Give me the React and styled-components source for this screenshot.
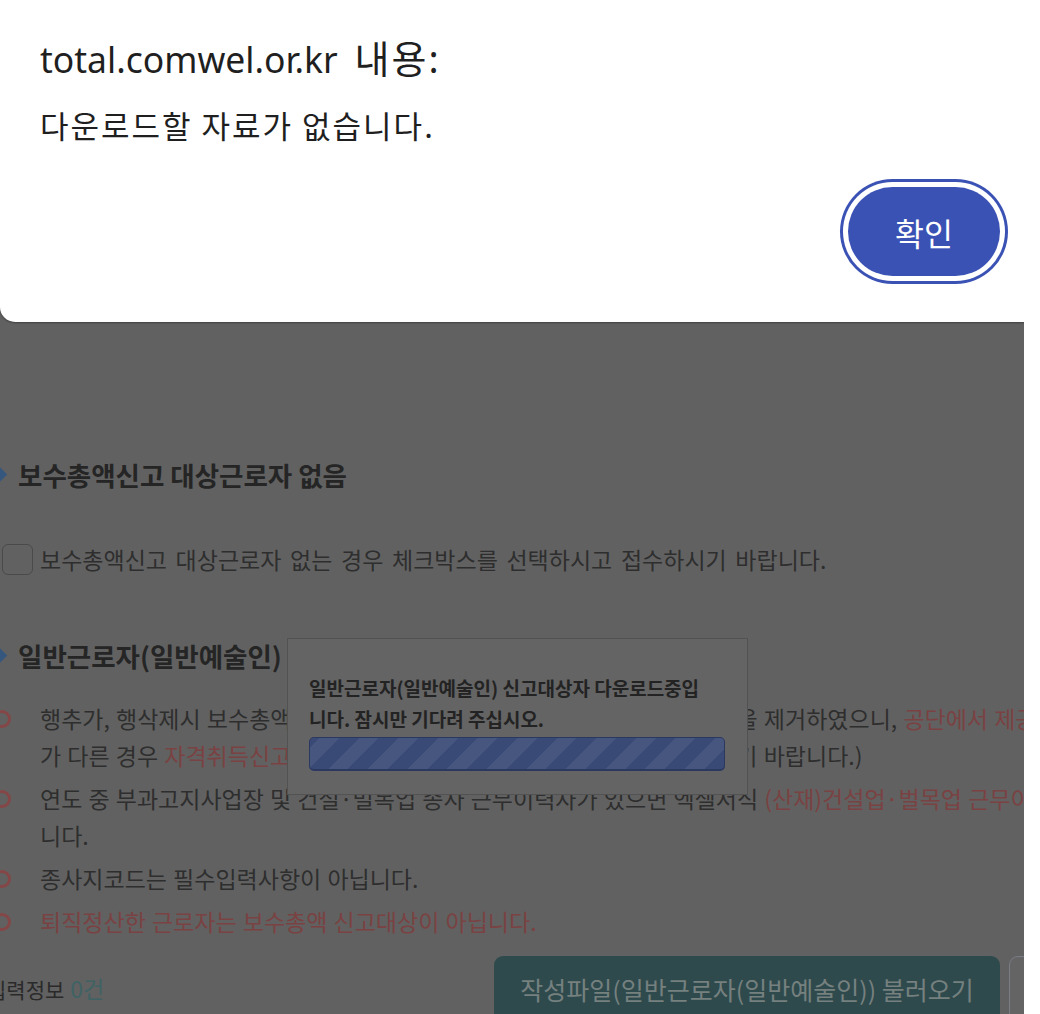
import React from 'react';
import styled, { createGlobalStyle } from 'styled-components';

const GlobalStyle = createGlobalStyle`
    html, body {
        margin: 0;
        padding: 0;
        background: #ffffff;
    }
`;

const Screen = styled.div`
    display: flex;
    width: 1040px;
    height: 1014px;
    overflow: hidden;
`;

const Viewport = styled.div`
    position: relative;
    flex: none;
    width: 1024px;
    height: 1014px;
    overflow: hidden;
    background: #616161;
    font-family: "Noto Sans CJK KR", "Noto Sans", sans-serif;
    color: #2e2e2e;
`;

const Gutter = styled.div`
    flex: none;
    width: 16px;
    background: #ffffff;
`;

const Page = styled.div`
    display: flex;
    flex-direction: column;
    padding-top: 457px;
`;

const SectionTitle = styled.h3`
    display: flex;
    align-items: center;
    margin: 0;
    height: 34px;
    font-size: 26.5px;
    font-weight: 700;
    color: #252525;
    white-space: nowrap;
`;

const Diamond = styled.span`
    flex: none;
    width: 11px;
    height: 11px;
    margin-left: -6px;
    margin-right: 13px;
    background: #36577d;
    transform: rotate(45deg);
`;

const CheckRow = styled.label`
    display: flex;
    align-items: center;
    gap: 7px;
    height: 32px;
    margin: 52px 0 63px 2px;
    font-size: 23px;
    word-spacing: 3.5px;
    white-space: nowrap;
`;

const CheckBox = styled.span`
    flex: none;
    box-sizing: border-box;
    width: 31px;
    height: 31px;
    border: 1.5px solid #4a4a4a;
    border-radius: 6px;
`;

const NoticeList = styled.ul`
    display: flex;
    flex-direction: column;
    gap: 6px;
    margin: 28px 0 0;
    padding: 0;
    list-style: none;
`;

const Notice = styled.li`
    display: flex;
    align-items: flex-start;
    font-size: 23px;
    word-spacing: 1px;
    line-height: 37px;
    white-space: nowrap;
    color: ${(p) => (p.$alert ? '#7a4242' : '#2e2e2e')};
`;

const Ring = styled.span`
    flex: none;
    box-sizing: border-box;
    width: 18px;
    height: 18px;
    margin: 10px 29px 0 -7px;
    border: 3px solid #844646;
    border-radius: 50%;
`;

const Red = styled.span`
    color: #7a4242;
`;

const BottomRow = styled.div`
    display: flex;
    align-items: flex-start;
    margin: 16px 0 0 -13px;
`;

const CountLabel = styled.div`
    flex: none;
    width: 507px;
    padding-top: 16px;
    font-size: 21px;
    line-height: 32px;
    color: #2a2a2a;
    white-space: nowrap;
`;

const Count = styled.span`
    margin-left: 6px;
    font-size: 23px;
    color: #3f6264;
`;

const FileButton = styled.button`
    flex: none;
    width: 506px;
    height: 66px;
    border: 0;
    border-radius: 9px;
    background: #2f4a4d;
    color: #75807f;
    font-family: inherit;
    font-size: 25px;
    padding-bottom: 2px;
    white-space: nowrap;
`;

const OutlineButton = styled.button`
    flex: none;
    width: 140px;
    height: 66px;
    margin-left: 9px;
    border: 1.5px solid #7a7c86;
    border-radius: 9px;
    background: #646464;
`;

const LoadingBox = styled.div`
    position: absolute;
    left: 287px;
    top: 638px;
    box-sizing: border-box;
    width: 461px;
    height: 157px;
    padding: 33px 22px 0 21px;
    background: #646464;
    border: 1px solid #525252;
`;

const LoadingText = styled.p`
    margin: 0 0 3px;
    font-size: 19px;
    font-weight: 700;
    line-height: 31px;
    color: #232323;
    white-space: nowrap;
`;

const Progress = styled.div`
    box-sizing: border-box;
    height: 34px;
    border: 1px solid #2b3860;
    border-bottom-width: 2px;
    border-radius: 5px;
    background: repeating-linear-gradient(
        -45deg,
        #3a4a77 0px,
        #3a4a77 14px,
        #46567f 14px,
        #46567f 28px
    );
`;

const Dialog = styled.div`
    position: absolute;
    top: 0;
    left: 0;
    right: 0;
    height: 322px;
    box-sizing: border-box;
    display: flex;
    flex-direction: column;
    padding: 34px 24px 0 40px;
    background: #ffffff;
    border-bottom-left-radius: 15px;
    box-shadow: 0 1px 2px rgba(0, 0, 0, 0.35);
`;

const DialogTitle = styled.div`
    font-family: "Noto Sans", "Noto Sans CJK KR", sans-serif;
    font-size: 35.5px;
    line-height: 48px;
    color: #1f1f1f;
    white-space: nowrap;
`;

const TitleSuffix = styled.span`
    margin-left: 17px;
    font-size: 38px;
    letter-spacing: 2px;
`;

const DialogMessage = styled.div`
    margin-top: 22px;
    font-size: 31px;
    letter-spacing: 2px;
    line-height: 40px;
    color: #1f1f1f;
`;

const DialogActions = styled.div`
    display: flex;
    justify-content: flex-end;
    margin-top: 42px;
`;

const ConfirmButton = styled.button`
    width: 152px;
    height: 89px;
    border: 0;
    border-radius: 45px;
    background: #3b52b5;
    color: #ffffff;
    font-family: "Noto Sans CJK KR", sans-serif;
    font-size: 31.5px;
    box-shadow: 0 0 0 5px #ffffff, 0 0 0 8px #3b52b5;
`;

const App = () => {
    return (
        <Screen>
            <GlobalStyle />
            <Viewport>
                <Page>
                    <SectionTitle>
                        <Diamond />
                        보수총액신고 대상근로자 없음
                    </SectionTitle>
                    <CheckRow>
                        <CheckBox />
                        보수총액신고 대상근로자 없는 경우 체크박스를 선택하시고 접수하시기 바랍니다.
                    </CheckRow>
                    <SectionTitle>
                        <Diamond />
                        일반근로자(일반예술인)
                    </SectionTitle>
                    <NoticeList>
                        <Notice>
                            <Ring />
                            <span>
                                행추가, 행삭제시 보수총액신고 대상 근로자 불일치 방지 위해 행추가 기능을 제거하였으니,{' '}
                                <Red>공단에서 제공한 근로자 정보와 실제 정보</Red>
                                <br />
                                가 다른 경우 <Red>자격취득신고</Red> 또는 상실신고를 반드시 먼저 처리 후 신고하시기 바랍니다.)
                            </span>
                        </Notice>
                        <Notice>
                            <Ring />
                            <span>
                                연도 중 부과고지사업장 및 건설·벌목업 종사 근무이력자가 있으면 엑셀서식{' '}
                                <Red>(산재)건설업·벌목업 근무이력 명세서</Red>를 작성하시기 바랍
                                <br />
                                니다.
                            </span>
                        </Notice>
                        <Notice>
                            <Ring />
                            <span>종사지코드는 필수입력사항이 아닙니다.</span>
                        </Notice>
                        <Notice $alert>
                            <Ring />
                            <span>퇴직정산한 근로자는 보수총액 신고대상이 아닙니다.</span>
                        </Notice>
                    </NoticeList>
                    <BottomRow>
                        <CountLabel>
                            입력정보<Count>0건</Count>
                        </CountLabel>
                        <FileButton>작성파일(일반근로자(일반예술인)) 불러오기</FileButton>
                        <OutlineButton />
                    </BottomRow>
                </Page>

                <LoadingBox>
                    <LoadingText>
                        일반근로자(일반예술인) 신고대상자 다운로드중입
                        <br />
                        니다. 잠시만 기다려 주십시오.
                    </LoadingText>
                    <Progress />
                </LoadingBox>

                <Dialog>
                    <DialogTitle>
                        total.comwel.or.kr<TitleSuffix>내용:</TitleSuffix>
                    </DialogTitle>
                    <DialogMessage>다운로드할 자료가 없습니다.</DialogMessage>
                    <DialogActions>
                        <ConfirmButton>확인</ConfirmButton>
                    </DialogActions>
                </Dialog>
            </Viewport>
            <Gutter />
        </Screen>
    );
};

export default App;
